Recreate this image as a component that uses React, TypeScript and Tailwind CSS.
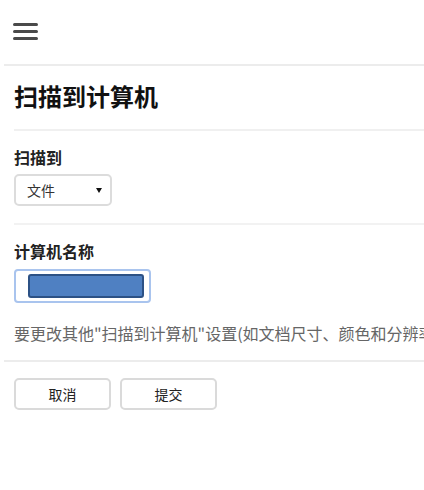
export default function App() {
  return (
    <div
      className="w-[424px] h-[490px] bg-white overflow-hidden text-[#222]"
      style={{ fontFamily: '"Noto Sans CJK SC", "Liberation Sans", sans-serif' }}
    >
      {/* 顶栏 */}
      <div className="h-[64px] pl-[13px] pt-[23px]">
        <button className="flex flex-col gap-[4px] w-[25px]">
          <span className="block h-[3px] w-full bg-[#4a4a4a] rounded-sm" />
          <span className="block h-[3px] w-full bg-[#4a4a4a] rounded-sm" />
          <span className="block h-[3px] w-full bg-[#4a4a4a] rounded-sm" />
        </button>
      </div>
      <div className="ml-[4px] h-[2px] bg-[#ececec]" />

      <div className="pl-[14px]">
        <h1 className="pt-[16px] pb-[19px] text-[24px] leading-[28px] font-bold text-[#111]">扫描到计算机</h1>
        <div className="h-[2px] bg-[#f0f0f0]" />

        {/* 扫描到 */}
        <div className="pt-[16px] text-[16px] leading-[20px] font-bold text-[#222]">扫描到</div>
        <div className="mt-[7px] w-[98px] h-[32px] border-2 border-[#dcdcdc] rounded-[5px] flex items-center justify-between pl-[11px] pr-[8px]">
          <span className="text-[14px] text-[#333]">文件</span>
          <span className="w-0 h-0 border-l-[3px] border-r-[3px] border-t-[5px] border-l-transparent border-r-transparent border-t-[#111]" />
        </div>
        <div className="mt-[17px] h-[2px] bg-[#f2f2f2]" />

        {/* 计算机名称 */}
        <div className="pt-[16px] text-[16px] leading-[20px] font-bold text-[#222]">计算机名称</div>
        <div className="mt-[8px] w-[137px] h-[34px] border-2 border-[#a9c4ee] rounded-[4px] flex items-center pl-[12px] pr-[5px]">
          <div className="w-[117px] h-[24px] bg-[#4f80c2] border-2 border-[#2c5185] rounded-[3px]" />
        </div>

        <p className="mt-[19px] text-[16px] leading-[22px] text-[#666] whitespace-nowrap">
          要更改其他"扫描到计算机"设置(如文档尺寸、颜色和分辨率，请使用设备控制面板)
        </p>
      </div>

      <div className="mt-[16px] ml-[4px] h-[2px] bg-[#ececec]" />

      {/* 按钮 */}
      <div className="pl-[14px] pt-[16px] flex gap-[9px]">
        <button className="w-[97px] h-[32px] border-2 border-[#dadada] rounded-[5px] text-[14px] text-[#222] bg-white">
          取消
        </button>
        <button className="w-[97px] h-[32px] border-2 border-[#dadada] rounded-[5px] text-[14px] text-[#222] bg-white">
          提交
        </button>
      </div>
    </div>
  );
}
